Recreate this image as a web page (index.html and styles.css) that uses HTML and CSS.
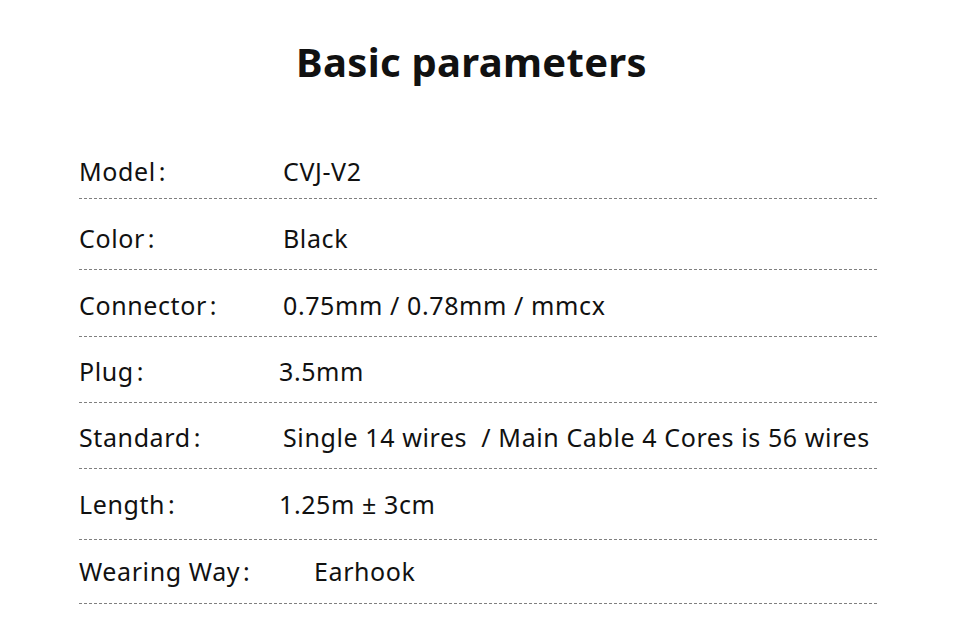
FILE: index.html
```html
<!DOCTYPE html>
<html lang="en">
<head>
<meta charset="utf-8">
<title>Basic parameters</title>
<link rel="stylesheet" href="styles.css">
</head>
<body>
<main class="page">
  <h1 class="title">Basic parameters</h1>
  <ul class="params">
    <li class="row row-1"><span class="label">Model<span class="colon">:</span></span><span class="value">CVJ-V2</span></li>
    <li class="row row-2"><span class="label">Color<span class="colon">:</span></span><span class="value">Black</span></li>
    <li class="row row-3"><span class="label">Connector<span class="colon">:</span></span><span class="value">0.75mm / 0.78mm / mmcx</span></li>
    <li class="row"><span class="label">Plug<span class="colon">:</span></span><span class="value value-left">3.5mm</span></li>
    <li class="row"><span class="label">Standard<span class="colon">:</span></span><span class="value">Single 14 wires&nbsp; / Main Cable 4 Cores is 56 wires</span></li>
    <li class="row row-6"><span class="label">Length<span class="colon">:</span></span><span class="value value-left">1.25m ± 3cm</span></li>
    <li class="row row-7"><span class="label">Wearing Way<span class="colon">:</span></span><span class="value value-right">Earhook</span></li>
  </ul>
</main>
</body>
</html>
```
FILE: styles.css
```css
* { box-sizing: border-box; }
html, body { margin: 0; padding: 0; background: #fff; }
body {
  font-family: "Noto Sans", "Open Sans", sans-serif;
  color: #111;
  width: 960px;
  height: 636px;
  overflow: hidden;
}
.page {
  padding: 0 81px 0 79px;
}
.title {
  margin: 0;
  padding-top: 38px;
  padding-right: 15px;
  height: 113px;
  text-align: center;
  font-size: 40px;
  font-weight: 700;
  line-height: 48px;
  letter-spacing: 0.3px;
}
.params {
  list-style: none;
  margin: 0;
  padding: 0;
}
.row {
  display: flex;
  align-items: center;
  height: 66px;
  padding: 18px 0 16px;
  font-size: 25px;
  line-height: 32px;
  letter-spacing: 0.6px;
  font-weight: 400;
  background-image: linear-gradient(to right, #808080 60%, transparent 60%);
  background-size: 5px 1px;
  background-repeat: repeat-x;
  background-position: left bottom;
}
.row-1 { height: 86px; padding-top: 42px; padding-bottom: 12px; }
.row-2 { height: 71px; padding-top: 23px; padding-bottom: 16px; }
.row-3 { height: 67px; padding-top: 19px; padding-bottom: 16px; }
.row-6 { height: 71px; padding-top: 19px; padding-bottom: 20px; }
.row-7 { height: 64px; padding-top: 15px; padding-bottom: 17px; }
.label {
  width: 204px;
  flex: none;
}
.colon { margin-left: 3px; }
.value-left { margin-left: -4px; }
.value-right { margin-left: 31px; }
```
